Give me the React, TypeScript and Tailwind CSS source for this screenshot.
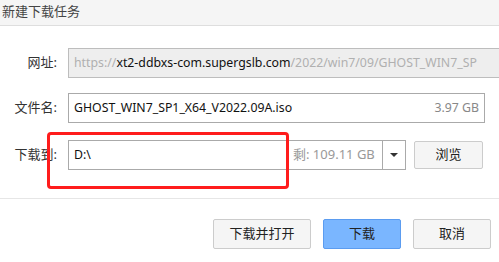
import React from 'react';

const font = 'font-["Noto_Sans","Noto_Sans_CJK_SC",sans-serif]';

const Label: React.FC<{ text: string }> = ({ text }) => (
  <div className="w-[68px] shrink-0 pr-[11px] text-right text-[13px] text-[#333]">{text}</div>
);

const App: React.FC = () => {
  return (
    <div className={`relative w-[499px] h-[262px] overflow-hidden bg-white ${font}`}>
      {/* Title bar */}
      <div className="h-[26px] bg-[#f5f5f5] border-b border-[#dedede] pl-[2px] text-[13px] leading-[22px] text-[#444]">
        新建下载任务
      </div>

      <div className="pt-[22px] flex flex-col">
        {/* URL */}
        <div className="flex items-center h-[30px]">
          <Label text="网址:" />
          <div className="flex-1 -mr-[20px] h-[30px] flex items-center px-[5px] bg-[#eeeeee] border border-[#bdbdbd] text-[12.3px] whitespace-nowrap overflow-hidden">
            <span className="text-[#b0b0b0]">https://</span>
            <span className="text-[#111]">xt2-ddbxs-com.supergslb.com</span>
            <span className="text-[#b0b0b0]">/2022/win7/09/GHOST_WIN7_SP</span>
          </div>
        </div>

        {/* File name */}
        <div className="flex items-center h-[30px] mt-[15px] pr-[14px]">
          <Label text="文件名:" />
          <div className="flex-1 h-[30px] flex items-center justify-between px-[5px] bg-white border border-[#aaaaaa] text-[12.3px]">
            <span className="text-[#111]">GHOST_WIN7_SP1_X64_V2022.09A.iso</span>
            <span className="text-[#888]">3.97 GB</span>
          </div>
        </div>

        {/* Save to */}
        <div className="flex items-center h-[30px] mt-[17px] pr-[16px]">
          <Label text="下载到:" />
          <div className="w-[338px] h-[30px] flex border border-[#aaaaaa] text-[12.3px]">
            <div className="flex-1 flex items-center px-[5px] text-[#111]">D:\</div>
            <div className="w-[89px] flex items-center text-[#999] text-[13px]">剩: 109.11 GB</div>
            <div className="w-[23px] border-l border-[#aaaaaa] flex items-center justify-center">
              <div className="w-0 h-0 border-l-[4px] border-r-[4px] border-t-[4px] border-l-transparent border-r-transparent border-t-[#333]" />
            </div>
          </div>
          <button className="ml-auto w-[69px] h-[28px] bg-[#f5f5f5] border border-[#cccccc] rounded-[2px] text-[13px] text-[#222]">
            浏览
          </button>
        </div>
      </div>

      {/* Separator */}
      <div className="mt-[28px] border-t border-[#e6e6e6]" />

      {/* Buttons */}
      <div className="flex justify-end gap-[12px] pr-[8px] mt-[20px]">
        <button className="w-[98px] h-[30px] bg-[#f5f5f5] border border-[#cccccc] rounded-[2px] text-[13px] text-[#222]">
          下载并打开
        </button>
        <button className="w-[78px] h-[30px] bg-[#7ab6ff] border border-[#5b9cf0] rounded-[2px] text-[13px] text-[#222]">
          下载
        </button>
        <button className="w-[78px] h-[30px] bg-[#f5f5f5] border border-[#cccccc] rounded-[2px] text-[13px] text-[#222]">
          取消
        </button>
      </div>

      {/* Red highlight annotation */}
      <div className="absolute left-[47px] top-[132px] w-[242px] h-[57px] border-[3px] border-[#ff1c1c] rounded-[4px] pointer-events-none" />
    </div>
  );
};

export default App;
